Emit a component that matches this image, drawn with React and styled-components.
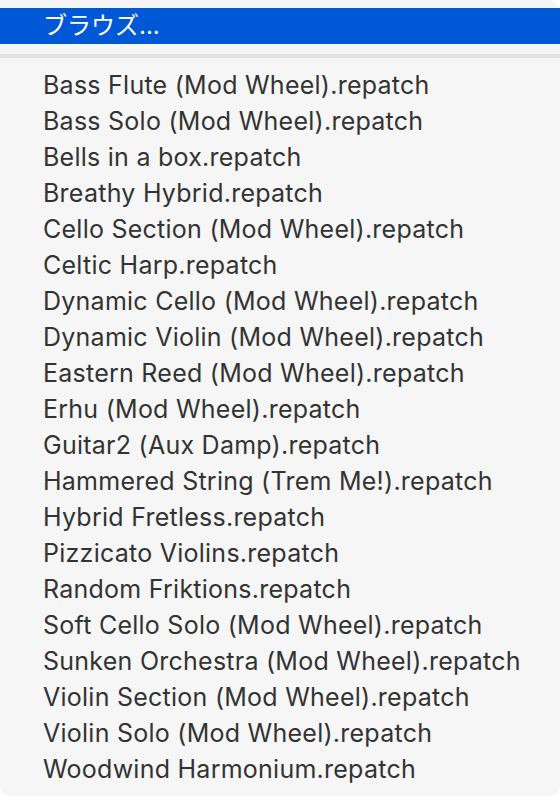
import React from 'react'
import styled, { createGlobalStyle } from 'styled-components'

const GlobalStyle = createGlobalStyle`
  html, body {
    margin: 0;
    padding: 0;
    background: #ffffff;
  }
`

const patches = [
  'Bass Flute (Mod Wheel).repatch',
  'Bass Solo (Mod Wheel).repatch',
  'Bells in a box.repatch',
  'Breathy Hybrid.repatch',
  'Cello Section (Mod Wheel).repatch',
  'Celtic Harp.repatch',
  'Dynamic Cello (Mod Wheel).repatch',
  'Dynamic Violin (Mod Wheel).repatch',
  'Eastern Reed (Mod Wheel).repatch',
  'Erhu (Mod Wheel).repatch',
  'Guitar2 (Aux Damp).repatch',
  'Hammered String (Trem Me!).repatch',
  'Hybrid Fretless.repatch',
  'Pizzicato Violins.repatch',
  'Random Friktions.repatch',
  'Soft Cello Solo (Mod Wheel).repatch',
  'Sunken Orchestra (Mod Wheel).repatch',
  'Violin Section (Mod Wheel).repatch',
  'Violin Solo (Mod Wheel).repatch',
  'Woodwind Harmonium.repatch',
]

const App = () => {
  return (
    <>
      <GlobalStyle />
      <Menu>
        <MenuItem $active>ブラウズ...</MenuItem>
        <Separator />
        <List>
          {patches.map((name) => (
            <MenuItem key={name}>{name}</MenuItem>
          ))}
        </List>
      </Menu>
    </>
  )
}

const Menu = styled.div`
  width: 560px;
  height: 796px;
  box-sizing: border-box;
  padding: 8px 0 9px;
  background: #f6f6f6;
  border-radius: 0 10px 10px 10px;
  display: flex;
  flex-direction: column;
  font-family: Inter, "Noto Sans CJK JP", sans-serif;
`

const MenuItem = styled.div`
  height: 36px;
  line-height: 36px;
  padding-left: 43px;
  font-size: ${(p) => (p.$active ? '24px' : '25px')};
  letter-spacing: ${(p) => (p.$active ? '0' : '0.25px')};
  color: ${(p) => (p.$active ? '#ffffff' : '#333333')};
  background: ${(p) => (p.$active ? '#0058d6' : 'transparent')};
  white-space: nowrap;
`

const Separator = styled.div`
  height: 4px;
  margin: 10px 0 9px;
  background: #e3e3e3;
`

const List = styled.div`
  display: flex;
  flex-direction: column;
`

export default App
